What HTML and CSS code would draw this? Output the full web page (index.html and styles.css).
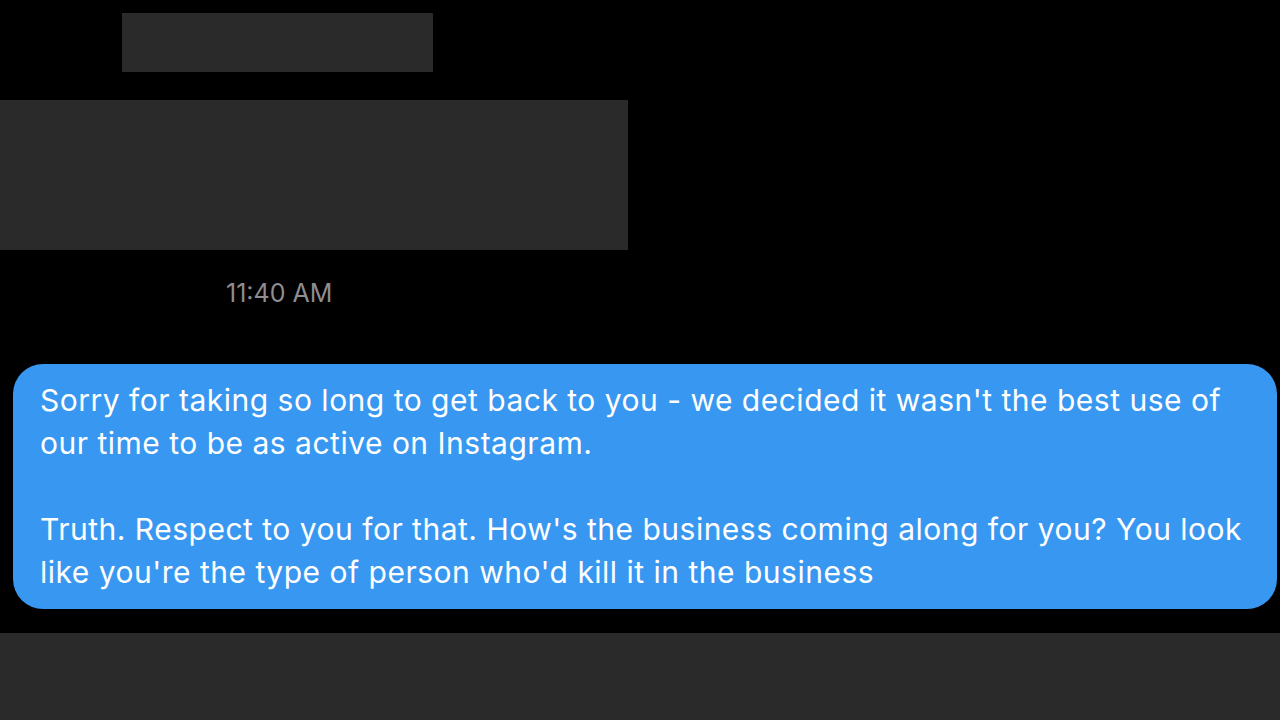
FILE: index.html
```html
<!DOCTYPE html>
<html lang="en">
<head>
<meta charset="utf-8">
<title>Message</title>
<link rel="stylesheet" href="styles.css">
</head>
<body>
<div class="screen">
  <div class="redact redact-name"></div>
  <div class="redact redact-block"></div>
  <div class="time">11:40 AM</div>
  <div class="bubble">
    <p>Sorry for taking so long to get back to you - we decided it wasn't the best use of our time to be as active on Instagram.</p>
    <p class="gap">Truth. Respect to you for that. How's the business coming along for you? You look like you're the type of person who'd kill it in the business</p>
  </div>
  <div class="composer"></div>
</div>
</body>
</html>
```
FILE: styles.css
```css
html, body {
  margin: 0;
  padding: 0;
  background: #000;
}
.screen {
  width: 1280px;
  height: 720px;
  display: flex;
  flex-direction: column;
  overflow: hidden;
  font-family: Inter, "Noto Sans", sans-serif;
}
.redact {
  background: #2a2a2a;
  flex: none;
}
.redact-name {
  margin: 13px 0 0 122px;
  width: 311px;
  height: 59px;
}
.redact-block {
  margin-top: 28px;
  width: 628px;
  height: 150px;
}
.time {
  margin: 28px 0 0 226px;
  font-size: 25px;
  line-height: 30px;
  color: #8d8d92;
  letter-spacing: 0;
}
.bubble {
  margin: 56px 3px 0 13px;
  padding: 15px 27px 15px 27px;
  background: #3897f0;
  border-radius: 30px;
  color: #fff;
  font-size: 30px;
  line-height: 43px;
  letter-spacing: 0.5px;
}
.bubble p {
  margin: 0;
}
.bubble .gap {
  margin-top: 43px;
}
.composer {
  margin-top: 24px;
  flex: 1;
  background: #2a2a2a;
}
```
